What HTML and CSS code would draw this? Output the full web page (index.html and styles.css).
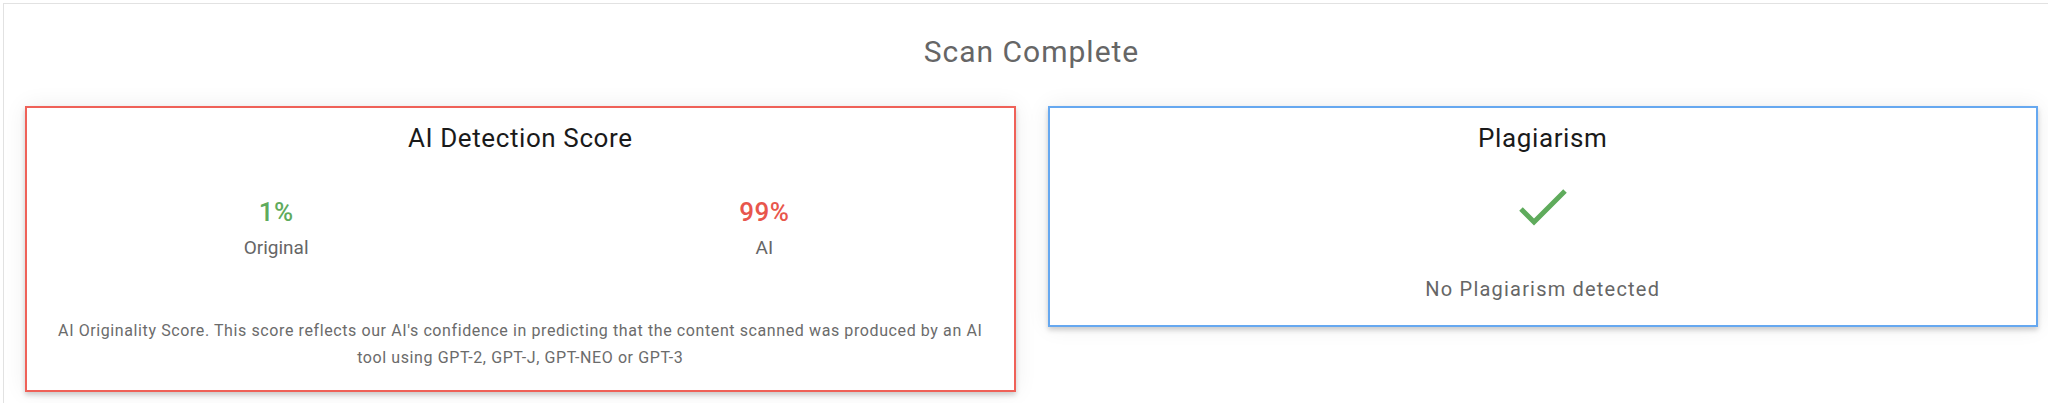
FILE: index.html
```html
<!DOCTYPE html>
<html lang="en">
<head>
    <meta charset="UTF-8">
    <meta name="viewport" content="width=device-width, initial-scale=1.0">
    <title>Scan Results</title>

    <link rel="stylesheet" href="styles.css">
</head>
<body>

    <div class="results">
        <h1 class="results-title">Scan Complete</h1>

        <div class="cards">
            <!-- AI detection card -->
            <div class="card card-ai">
                <h2 class="card-title">AI Detection Score</h2>
                <div class="scores">
                    <div class="score">
                        <div class="score-value original">1%</div>
                        <div class="score-label">Original</div>
                    </div>
                    <div class="score">
                        <div class="score-value ai">99%</div>
                        <div class="score-label">AI</div>
                    </div>
                </div>
                <p class="score-note">AI Originality Score. This score reflects our AI's confidence in predicting that the content scanned was produced by an AI tool using GPT-2, GPT-J, GPT-NEO or GPT-3</p>
            </div>

            <!-- Plagiarism card -->
            <div class="card card-plag">
                <h2 class="card-title">Plagiarism</h2>
                <svg class="check" width="48" height="37" viewBox="0 0 48 37">
                    <polyline points="2,20 15,33 46,2" fill="none" stroke="#5fab5c" stroke-width="5"/>
                </svg>
                <div class="plag-text">No Plagiarism detected</div>
            </div>
        </div>
    </div>

</body>
</html>
```

FILE: styles.css
```css
body {
    font-family: Roboto, "Liberation Sans", sans-serif;
    background-color: #fff;
    margin: 0;
    overflow: hidden;
}

.results {
    box-sizing: border-box;
    width: 2057px;
    margin: 3px 0 0 3px;
    padding: 30px 21px 40px;
    border: 1px solid #e2e2e2;
}

.results-title {
    margin: 0 0 36px;
    font-size: 30px;
    line-height: 36px;
    font-weight: 400;
    letter-spacing: 1px;
    color: #666;
    text-align: center;
}

.cards {
    display: flex;
    gap: 32px;
    align-items: flex-start;
}

.card {
    flex: 1;
    background-color: #fff;
    border: 2px solid #ccc;
    padding: 15px 0 19px;
    box-shadow: 0 3px 5px rgba(0, 0, 0, 0.18), 0 0 22px rgba(0, 0, 0, 0.07);
}

.card-ai {
    border-color: #ef6158;
}

.card-plag {
    border-color: #66a8f0;
    padding-bottom: 24px;
}

.card-title {
    margin: 0;
    font-size: 26px;
    line-height: 31px;
    font-weight: 400;
    letter-spacing: 0.6px;
    color: #1a1a1a;
    text-align: center;
}

.scores {
    display: flex;
    margin-top: 43px;
    padding: 0 5px;
}

.score {
    flex: 1;
    text-align: center;
}

.score-value {
    font-size: 26px;
    line-height: 31px;
    font-weight: 500;
    letter-spacing: 0.5px;
}

.score-value.original {
    color: #5fab5c;
}

.score-value.ai {
    color: #e8564c;
}

.score-label {
    margin-top: 8px;
    font-size: 19px;
    line-height: 23px;
    color: #666;
}

.score-note {
    margin: 58px 0 0;
    padding: 0 20px;
    font-size: 16px;
    line-height: 27px;
    letter-spacing: 0.6px;
    color: #6b6b6b;
    text-align: center;
}

.check {
    display: block;
    margin: 35px auto 0;
}

.plag-text {
    margin-top: 51px;
    font-size: 20px;
    line-height: 24px;
    color: #666;
    text-align: center;
    letter-spacing: 1.2px;
}
```
